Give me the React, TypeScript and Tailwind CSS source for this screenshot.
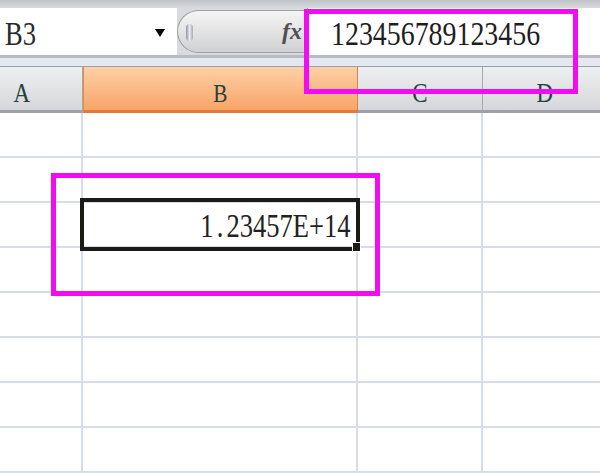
import React from 'react';

const serif = { fontFamily: '"Liberation Serif", "DejaVu Serif", serif' };

// narrow, tall glyphs like the old bitmap font in the shot
function Narrow({ children, className = '' }: { children: React.ReactNode; className?: string }) {
  return (
    <span className={`inline-block whitespace-nowrap ${className}`} style={serif}>
      {children}
    </span>
  );
}

const columns = [
  { key: 'A', width: 'w-[83px]', label: 'A', labelPos: 'justify-start pl-[12px]' },
  { key: 'B', width: 'w-[275px]', label: 'B', labelPos: 'justify-center' },
  { key: 'C', width: 'w-[125px]', label: 'C', labelPos: 'justify-center' },
  { key: 'D', width: 'w-[125px]', label: 'D', labelPos: 'justify-center' },
];

const rows = [1, 2, 3, 4, 5, 6, 7, 8];

export default function App() {
  return (
    <div className="relative w-[600px] h-[475px] overflow-hidden bg-white">
      {/* Name box + formula bar */}
      <div className="flex flex-col h-[67px] bg-[#e3e7ef]">
        <div className="h-[8px] bg-gradient-to-b from-[#bfc2c6] to-[#d8dadd]" />
        <div className="flex h-[47px] bg-[#d8dadd]">
          <div className="w-[177px] shrink-0 bg-white flex items-center justify-between pl-[5px] pr-[12px]">
            <Narrow className="text-[34px] leading-none text-[#2a2a2a] origin-left scale-x-[0.78] mt-[4px]">B3</Narrow>
            <span className="w-0 h-0 mt-[2px] border-l-[5px] border-r-[5px] border-t-[8px] border-l-transparent border-r-transparent border-t-black" />
          </div>
          <div className="relative w-[130px] shrink-0 my-[2px] rounded-l-full border border-r-0 border-[#9ea2a7] bg-gradient-to-b from-[#f4f4f4] via-[#e4e4e4] to-[#cfd0d2] flex items-center justify-end pr-[5px]">
            <span className="absolute left-[8px] top-[13px] w-[7px] h-[17px] rounded-full bg-gradient-to-r from-[#8e959e] via-[#e8ebef] to-[#a6acb3]" />
            <span className="text-[24px] italic font-bold text-[#505050] leading-none mb-[2px]" style={serif}>
              fx
            </span>
          </div>
          <div className="flex-1 min-w-0 overflow-hidden bg-white border-l border-[#9ea2a7] flex items-center pl-[23px]">
            <Narrow className="text-[34px] leading-none text-[#1e1e1e] origin-left scale-x-[0.82] mt-[4px]">
              123456789123456
            </Narrow>
          </div>
        </div>
        <div className="h-[3px] bg-[#b8bbc0]" />
        <div className="flex-1 bg-[#e4e8f1] border-b border-[#9aa0a9]" />
      </div>

      {/* Column headers */}
      <div className="flex h-[46px]">
        {columns.map((c) =>
          c.key === 'B' ? (
            <div
              key={c.key}
              className={`${c.width} shrink-0 flex items-end pb-[4px] ${c.labelPos} bg-gradient-to-b from-[#fdd0a6] to-[#f8a467] border-l border-[#e58a47] border-r border-r-[#d9834a] border-b-[3px] border-b-[#e07a3a]`}
            >
              <Narrow className="text-[25px] leading-none text-[#24423c] scale-x-[0.85]">{c.label}</Narrow>
            </div>
          ) : (
            <div
              key={c.key}
              className={`${c.width} shrink-0 flex items-end pb-[3px] ${c.labelPos} bg-gradient-to-b from-[#eeeff0] to-[#d5d7da] border-r border-[#a3a8af] border-b-[3px] border-b-[#9ea2a8]`}
            >
              <Narrow className="text-[27px] leading-none text-[#24423c] scale-x-[0.85]">{c.label}</Narrow>
            </div>
          ),
        )}
      </div>

      {/* Cell grid */}
      <div className="flex flex-col">
        {rows.map((r) => (
          <div key={r} className="flex h-[45px] shrink-0 border-b-2 border-[#d6dce8]">
            {columns.map((c) => (
              <div key={c.key} className={`${c.width} shrink-0 border-r-2 border-[#d6dce8]`} />
            ))}
          </div>
        ))}
      </div>

      {/* Active cell B3 */}
      <div className="absolute left-[80px] top-[198px] w-[280px] h-[53px] border-[4px] border-[#1b1a17] flex items-center justify-end pr-[6px]">
        <Narrow className="text-[34px] leading-none text-[#222] origin-right scale-x-[0.78] mt-[3px]">
          1<span className="mx-[4px]">.</span>23457E+14
        </Narrow>
        <span className="absolute right-[-5px] bottom-[-5px] w-[9px] h-[10px] bg-[#1b1a17] border border-white" />
      </div>

      {/* Annotation boxes */}
      <div className="absolute left-[304px] top-[9px] w-[274px] h-[85px] border-[5px] border-[#f20cf2]" />
      <div className="absolute left-[51px] top-[173px] w-[329px] h-[123px] border-[5px] border-[#f20cf2]" />
    </div>
  );
}
